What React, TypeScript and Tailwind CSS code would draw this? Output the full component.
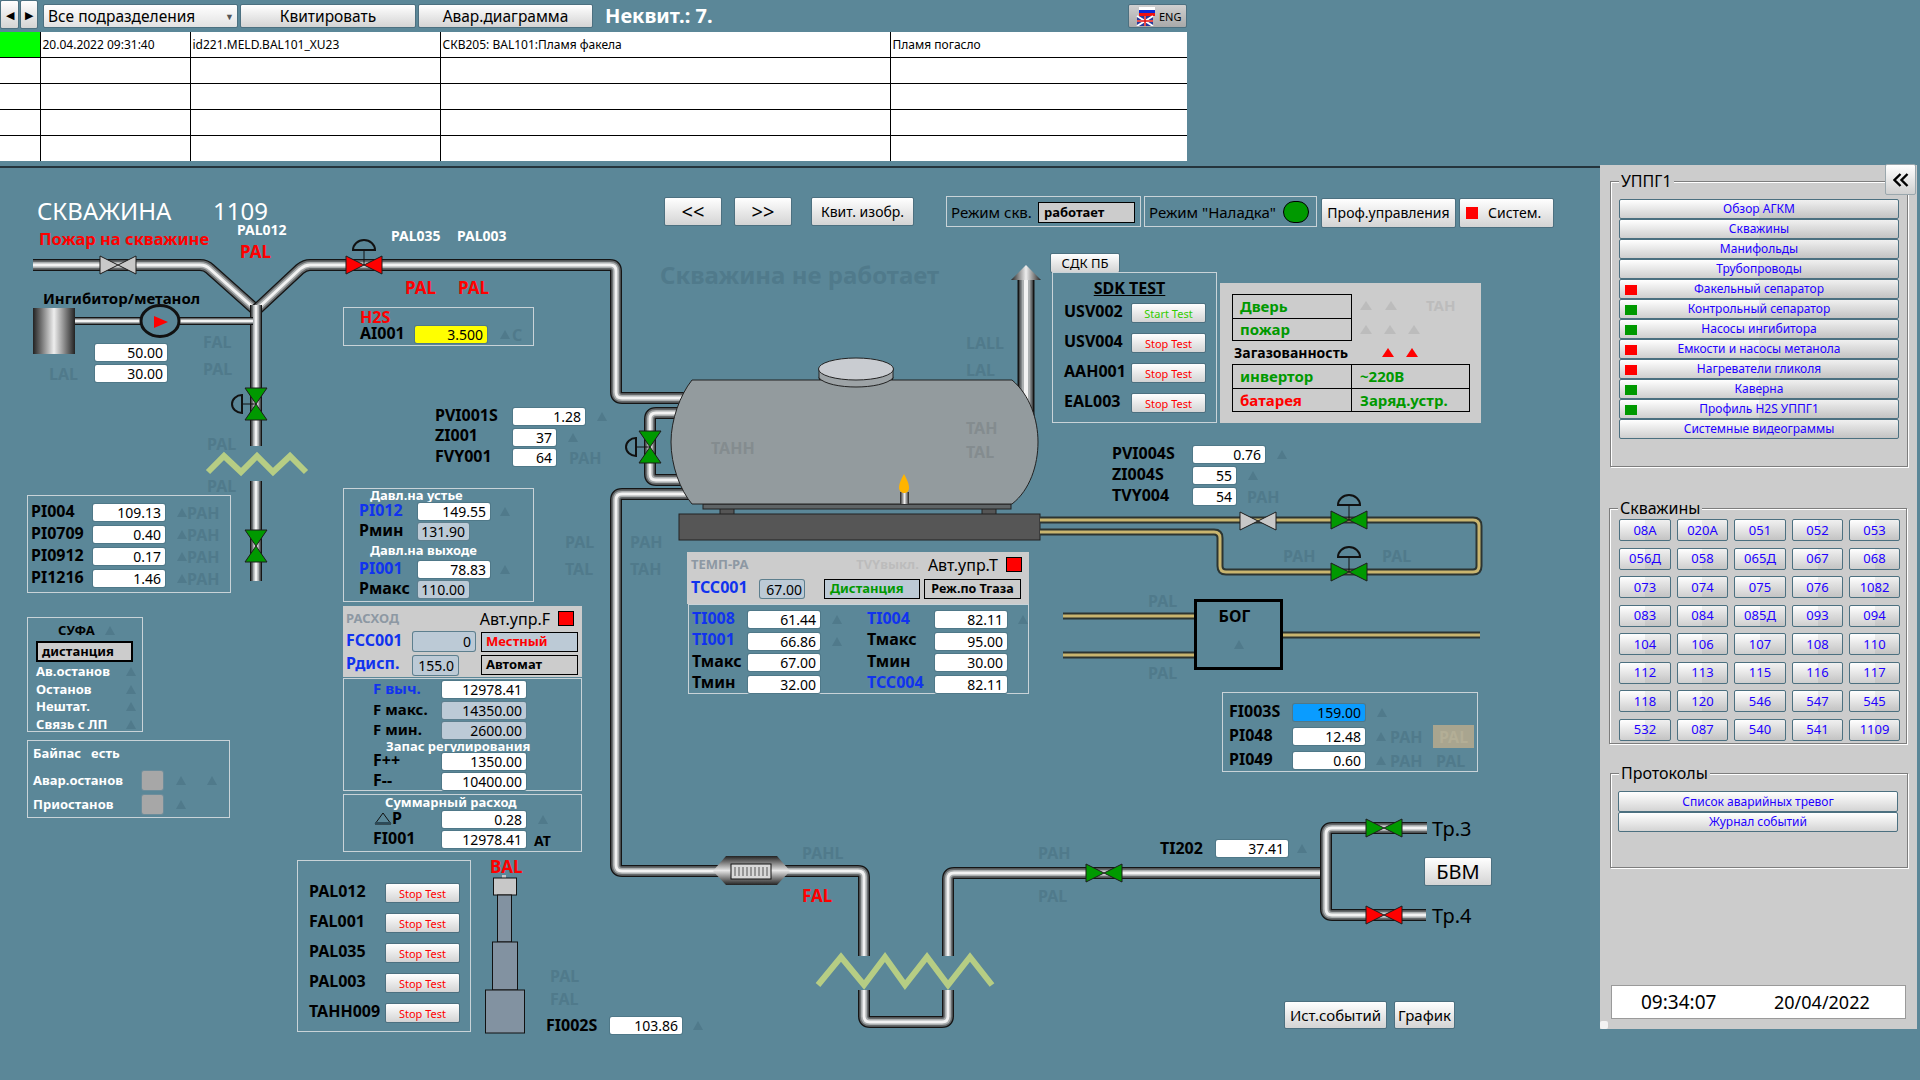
import type { ReactNode } from "react";
import clsx, { type ClassValue } from "clsx";
import { twMerge } from "tailwind-merge";

type Props = { className?: string; children?: ReactNode };

const cn = (...parts: ClassValue[]) => twMerge(clsx(parts));

const menuItems: { label: string; led?: "red" | "green" }[] = [
  { label: "Обзор АГКМ" },
  { label: "Скважины" },
  { label: "Манифольды" },
  { label: "Трубопроводы" },
  { label: "Факельный сепаратор", led: "red" },
  { label: "Контрольный сепаратор", led: "green" },
  { label: "Насосы ингибитора", led: "green" },
  { label: "Емкости и насосы метанола", led: "red" },
  { label: "Нагреватели гликоля", led: "red" },
  { label: "Каверна", led: "green" },
  { label: "Профиль H2S УППГ1", led: "green" },
  { label: "Системные видеограммы" },
];

const wells = [
  "08А", "020А", "051", "052", "053",
  "056Д", "058", "065Д", "067", "068",
  "073", "074", "075", "076", "1082",
  "083", "084", "085Д", "093", "094",
  "104", "106", "107", "108", "110",
  "112", "113", "115", "116", "117",
  "118", "120", "546", "547", "545",
  "532", "087", "540", "541", "1109",
];

const stopTests = ["PAL012", "FAL001", "PAL035", "PAL003", "TAHH009"];

function Val({ className, children }: Props) {
  return (
    <div className={cn("flex h-[17px] items-center justify-end rounded-[2px] bg-white pr-[4px] pt-[1px] text-[14px] text-black shadow-[0_0_0_1px_#4f7888]", className, "leading-none")}>
      {children}
    </div>
  );
}

function GrayVal({ className, children }: Props) {
  return (
    <div className={cn("flex h-[17px] items-center justify-end rounded-[2px] bg-[#bccad6] pr-[4px] pt-[1px] text-[14px] text-black shadow-[0_0_0_1px_#5d7f8e]", className, "leading-none")}>
      {children}
    </div>
  );
}

function Tag({ className, children }: Props) {
  return <span className={cn("-translate-y-[2px] whitespace-nowrap text-[16px] font-bold text-black", className, "leading-[16px]")}>{children}</span>;
}

function Ghost({ className, children }: Props) {
  return <span className={cn("whitespace-nowrap text-[16px] font-bold text-[#507a8b]", className, "leading-[16px]")}>{children}</span>;
}

function Tri({ className }: { className?: string }) {
  return <span className={cn("inline-block h-0 w-0 border-x-[5px] border-b-[9px] border-x-transparent border-b-[#507a8b]", className)} />;
}

function Btn({ className, children }: Props) {
  return (
    <button
      type="button"
      className={cn("flex items-center justify-center whitespace-nowrap rounded-[2px] border border-[#4c7080] bg-gradient-to-b from-white to-[#d4d4d4] text-black", className, "leading-none")}
    >
      {children}
    </button>
  );
}

function TestBtn({ children, green = false }: { children: ReactNode; green?: boolean }) {
  return <Btn className={cn("h-[20px] w-[75px] text-[11px]", green ? "text-[#33cc00]" : "text-[#ff0000]")}>{children}</Btn>;
}

function Pipe({ d, w = 12 }: { d: string; w?: number }) {
  return (
    <g fill="none" strokeLinejoin="round">
      <path d={d} stroke="#151515" strokeWidth={w} />
      <path d={d} stroke="#666a6c" strokeWidth={w * 0.78} />
      <path d={d} stroke="#a9adae" strokeWidth={w * 0.52} />
      <path d={d} stroke="#f2f2f2" strokeWidth={w * 0.24} />
    </g>
  );
}

function GasPipe({ d }: { d: string }) {
  return (
    <g fill="none" strokeLinejoin="round">
      <path d={d} stroke="#2c3532" strokeWidth={7} />
      <path d={d} stroke="#c9b56f" strokeWidth={3} />
    </g>
  );
}

function ValveH({ x, y, fill, hw = 18, hh = 9 }: { x: number; y: number; fill: string; hw?: number; hh?: number }) {
  return (
    <polygon
      points={`${x - hw},${y - hh} ${x},${y} ${x + hw},${y - hh} ${x + hw},${y + hh} ${x},${y} ${x - hw},${y + hh}`}
      fill={fill}
      stroke="#1c1c1c"
      strokeWidth={1}
    />
  );
}

function ValveV({ x, y, fill, hw = 11, hh = 16 }: { x: number; y: number; fill: string; hw?: number; hh?: number }) {
  return (
    <polygon
      points={`${x - hw},${y - hh} ${x + hw},${y - hh} ${x},${y} ${x + hw},${y + hh} ${x - hw},${y + hh} ${x},${y}`}
      fill={fill}
      stroke="#1c1c1c"
      strokeWidth={1}
    />
  );
}

function DomeUp({ x, y }: { x: number; y: number }) {
  return (
    <g fill="none" stroke="#111" strokeWidth={2}>
      <path d={`M${x - 11} ${y - 15} A11 10 0 0 1 ${x + 11} ${y - 15} Z`} />
      <path d={`M${x} ${y - 15} V${y}`} strokeWidth={1} />
    </g>
  );
}

function DomeLeft({ x, y }: { x: number; y: number }) {
  return (
    <g fill="none" stroke="#111" strokeWidth={2}>
      <path d={`M${x - 14} ${y - 9} A10 9 0 0 0 ${x - 14} ${y + 9} Z`} />
      <path d={`M${x - 14} ${y} H${x}`} strokeWidth={1} />
    </g>
  );
}

function Scheme() {
  return (
    <svg className="absolute left-0 top-0 h-[1080px] w-[1600px]" viewBox="0 0 1600 1080">
      <defs>
        <linearGradient id="cyl" x1="0" x2="1" y1="0" y2="0">
          <stop offset="0" stopColor="#222" />
          <stop offset="0.5" stopColor="#eee" />
          <stop offset="1" stopColor="#222" />
        </linearGradient>
        <linearGradient id="band" x1="0" x2="0" y1="0" y2="1">
          <stop offset="0" stopColor="#222" />
          <stop offset="0.5" stopColor="#e6e6e6" />
          <stop offset="1" stopColor="#222" />
        </linearGradient>
      </defs>

      <Pipe d="M33 265 H200 Q206 265 210 269 L256 310" />
      <Pipe d="M256 310 L300 269 Q305 265 310 265 H610 Q616 265 616 271 V392 Q616 398 622 398 H690" />
      <Pipe d="M256 305 V446" />
      <Pipe d="M256 481 V581" />
      <Pipe d="M75 321 H253" w={8} />
      <Pipe d="M690 494 H622 Q616 494 616 500 V865 Q616 871 622 871 H858 Q864 871 864 877 V956" />
      <Pipe d="M864 990 V1016 Q864 1022 870 1022 H942 Q948 1022 948 1016 V990" />
      <Pipe d="M948 956 V879 Q948 873 954 873 H1322" />
      <Pipe d="M1427 828 H1332 Q1326 828 1326 834 V909 Q1326 915 1332 915 H1426" />
      <Pipe d="M690 413 H656 Q650 413 650 419 V474 Q650 480 656 480 H690" />
      <Pipe d="M1026 280 V420" w={17} />
      <polygon points="1026,265 1041,280 1011,280" fill="url(#cyl)" />

      <rect x="33" y="308" width="42" height="46" fill="url(#cyl)" />
      <ellipse cx="160" cy="321" rx="19" ry="15.5" fill="#5b8798" stroke="#111" strokeWidth={3} />
      <polygon points="154,316 168,322 154,328" fill="#ff0000" />

      <ValveH x={118} y={265} fill="#c8c8c8" />
      <ValveH x={364} y={265} fill="#ff0000" />
      <DomeUp x={364} y={265} />
      <ValveV x={256} y={404} fill="#009900" />
      <DomeLeft x={256} y={404} />
      <ValveV x={256} y={546} fill="#009900" />
      <ValveV x={650} y={447} fill="#009900" />
      <DomeLeft x={650} y={447} />

      <polyline points="208,472 224,456 241,472 257,456 273,472 290,456 306,472" fill="none" stroke="#b6cd84" strokeWidth={6} />
      <polyline points="818,985 841,957 864,985 885,957 905,985 927,957 948,985 970,957 992,985" fill="none" stroke="#b6cd84" strokeWidth={6} />

      <rect x="720" y="508" width="14" height="7" fill="#555" stroke="#222" />
      <rect x="982" y="508" width="14" height="7" fill="#555" stroke="#222" />
      <rect x="679" y="514" width="361" height="26" fill="#565656" stroke="#222" />
      <rect x="703" y="504" width="308" height="5" fill="#5f6466" stroke="#222" />
      <ellipse cx="856" cy="378" rx="37" ry="12" fill="#7f8587" stroke="#222" />
      <path d="M692 380 H1012 C1030 395 1038 420 1038 442 C1038 465 1030 490 1012 504 H692 C680 490 671 465 671 442 C671 420 680 395 692 380 Z" fill="#939b9e" stroke="#222" />
      <path d="M819 369 V378 C830 390 882 390 893 378 V369 Z" fill="#9da3a6" stroke="#222" />
      <ellipse cx="856" cy="369" rx="37.5" ry="11" fill="#c9ccd1" stroke="#222" />

      <rect x="900" y="492" width="9" height="12" fill="url(#cyl)" />
      <path d="M904 474 C900 481 899 485 899 488 C899 491 902 493 904 493 C907 493 909 491 909 488 C909 485 908 481 904 474 Z" fill="#ffb400" />

      <polygon points="713,871 726,856 777,856 790,871 777,885 726,885" fill="url(#band)" />
      <rect x="731" y="864" width="40" height="15" fill="#d8d8d8" stroke="#111" />
      <path d="M735 867 V876 M739 867 V876 M743 867 V876 M747 867 V876 M751 867 V876 M755 867 V876 M759 867 V876 M763 867 V876 M767 867 V876" stroke="#555" />

      <rect x="502" y="875" width="4" height="4" fill="#c8c8c8" />
      <rect x="493.5" y="878" width="23" height="17" fill="#c8c8c8" stroke="#111" />
      <rect x="497.5" y="895" width="14" height="47" fill="#8292a1" stroke="#111" />
      <rect x="492.5" y="942" width="25" height="48" fill="#8292a1" stroke="#111" />
      <rect x="485.5" y="990" width="39" height="43" fill="#8292a1" stroke="#111" />

      <GasPipe d="M1040 520 H1473 Q1479 520 1479 526 V566 Q1479 572 1473 572 H1226 Q1220 572 1220 566 V538 Q1220 532 1214 532 H1040" />
      <GasPipe d="M1063 616 H1194" />
      <GasPipe d="M1063 655 H1194" />
      <GasPipe d="M1282 635 H1480" />
      <ValveH x={1258} y={521} fill="#c8c8c8" />
      <ValveH x={1349} y={520} fill="#009900" />
      <DomeUp x={1349} y={520} />
      <ValveH x={1349} y={572} fill="#009900" />
      <DomeUp x={1349} y={572} />

      <ValveH x={1104} y={873} fill="#009900" />
      <ValveH x={1384} y={828} fill="#009900" />
      <ValveH x={1384} y={915} fill="#ff0000" />

      <polygon points="375,824 383,813 391,824" fill="none" stroke="#111" strokeWidth={1} />
      <rect x="375" y="822" width="16" height="2" fill="#2c4a58" />
    </svg>
  );
}

function Header() {
  return (
    <div>
      <div className="flex h-[32px] w-[1187px] items-start text-[15.5px] text-black">
        <div className="flex gap-[1px]">
          <Btn className="h-[29px] w-[19px] text-[11px]">◀</Btn>
          <Btn className="h-[29px] w-[18px] text-[11px]">▶</Btn>
        </div>
        <div className="ml-[5px] mt-[4px] flex h-[24px] w-[195px] items-center justify-between rounded-[2px] border border-[#4c7080] bg-gradient-to-b from-white to-[#e2e2e2] pl-[4px] pr-[3px] pt-[1px]">
          <span>Все подразделения</span>
          <span className="text-[9px] text-[#555]">▼</span>
        </div>
        <Btn className="ml-[2px] mt-[4px] h-[24px] w-[176px] pt-[2px] text-[15.5px]">Квитировать</Btn>
        <Btn className="ml-[2px] mt-[4px] h-[24px] w-[175px] pt-[2px] text-[15.5px]">Авар.диаграмма</Btn>
        <span className="ml-[12px] mt-[3px] text-[20px] font-bold leading-[26px] text-white">Неквит.: 7.</span>
        <button
          type="button"
          className="ml-auto mt-[4px] flex h-[24px] w-[59px] items-center gap-[3px] rounded-[2px] border border-[#4c7080] bg-gradient-to-b from-[#d0d0d0] to-[#a9a9a9] pl-[7px] text-[11px] leading-none"
        >
          <svg width="20" height="19" viewBox="0 0 20 19">
            <rect width="16" height="3" x="3" fill="#ffffff" />
            <rect width="16" height="3" x="3" y="3" fill="#0a28d8" />
            <rect width="16" height="3" x="3" y="6" fill="#ee1111" />
            <rect width="16" height="10" x="1" y="9" fill="#2a3a9a" />
            <path d="M1 9 L17 19 M17 9 L1 19 M9 9 V19 M1 14 H17" stroke="#ffffff" strokeWidth={2} />
            <path d="M9 9 V19 M1 14 H17" stroke="#e01010" strokeWidth={1.5} />
          </svg>
          ENG
        </button>
      </div>
      <table className="h-[128px] w-[1187px] table-fixed border-collapse bg-white text-[12px] text-black">
        <colgroup>
          <col className="w-[40px]" />
          <col className="w-[150px]" />
          <col className="w-[250px]" />
          <col className="w-[450px]" />
          <col />
        </colgroup>
        <tbody>
          <tr className="h-[25px]">
            <td className="bg-[#00ff00]" />
            <td className="border-l border-black pl-[2px] pt-[2px]">20.04.2022 09:31:40</td>
            <td className="border-l border-black pl-[2px] pt-[2px]">id221.MELD.BAL101_XU23</td>
            <td className="border-l border-black pl-[2px] pt-[2px]">СКВ205: BAL101:Пламя факела</td>
            <td className="border-l border-black pl-[2px] pt-[2px]">Пламя погасло</td>
          </tr>
          {[0, 1, 2, 3].map((row) => (
            <tr key={row} className="h-[26px] border-t border-black">
              <td />
              <td className="border-l border-black" />
              <td className="border-l border-black" />
              <td className="border-l border-black" />
              <td className="border-l border-black" />
            </tr>
          ))}
        </tbody>
      </table>
      <div className="mt-[5px] h-[2px] w-[1600px] bg-[#24343c]" />
    </div>
  );
}

function LeftTop() {
  return (
    <>
      <span className="absolute left-[37px] top-[196px] text-[24px] leading-[30px] text-white">СКВАЖИНА</span>
      <span className="absolute left-[213px] top-[196px] text-[24px] leading-[30px] text-white">1109</span>
      <span className="absolute left-[39px] top-[230px] whitespace-nowrap text-[16.5px] font-bold leading-[18px] text-[#ff0000]">Пожар на скважине</span>
      <Tag className="absolute left-[237px] top-[224px] text-[14px] text-white">PAL012</Tag>
      <Tag className="absolute left-[391px] top-[230px] text-[14px] text-white">PAL035</Tag>
      <Tag className="absolute left-[457px] top-[230px] text-[14px] text-white">PAL003</Tag>
      <Tag className="absolute left-[240px] top-[246px] text-[17px] text-[#ff0000]">PAL</Tag>
      <Tag className="absolute left-[405px] top-[282px] text-[17px] text-[#ff0000]">PAL</Tag>
      <Tag className="absolute left-[458px] top-[282px] text-[17px] text-[#ff0000]">PAL</Tag>
      <Tag className="absolute left-[43px] top-[292px] text-[15px]">Ингибитор/метанол</Tag>
      <Val className="absolute left-[95px] top-[344px] w-[72px]">50.00</Val>
      <Val className="absolute left-[95px] top-[365px] w-[72px]">30.00</Val>
      <Ghost className="absolute left-[203px] top-[334px]">FAL</Ghost>
      <Ghost className="absolute left-[203px] top-[361px]">PAL</Ghost>
      <Ghost className="absolute left-[49px] top-[366px]">LAL</Ghost>
      <Ghost className="absolute left-[207px] top-[436px]">PAL</Ghost>
      <Ghost className="absolute left-[207px] top-[478px]">PAL</Ghost>

      <div className="absolute left-[343px] top-[307px] flex h-[39px] w-[191px] flex-col border border-[#c9d3d8] pl-[16px] pt-[3px]">
        <Tag className="text-[#ff0000]">H2S</Tag>
        <div className="-mt-[1px] flex items-center">
          <Tag className="w-[55px]">AI001</Tag>
          <Val className="w-[72px] bg-[#ffff00]">3.500</Val>
          <Tri className="ml-[13px]" />
          <Ghost className="ml-[2px]">C</Ghost>
        </div>
      </div>

      <div className="absolute left-[27px] top-[495px] flex h-[98px] w-[204px] flex-col gap-[5px] border border-[#c9d3d8] pl-[3px] pt-[8px]">
        {[
          ["PI004", "109.13"],
          ["PI0709", "0.40"],
          ["PI0912", "0.17"],
          ["PI1216", "1.46"],
        ].map(([tag, value]) => (
          <div key={tag} className="flex items-center">
            <Tag className="w-[62px]">{tag}</Tag>
            <Val className="w-[72px]">{value}</Val>
            <Tri className="ml-[12px]" />
            <Ghost>PAH</Ghost>
          </div>
        ))}
      </div>

      <div className="absolute left-[27px] top-[617px] flex h-[115px] w-[116px] flex-col items-start border border-[#c9d3d8] pl-[8px] pt-[4px] text-[13px] font-bold leading-[17.5px] text-white">
        <span className="flex w-full items-center pl-[22px] leading-[16px] text-black">
          СУФА
          <Tri className="ml-[10px]" />
        </span>
        <div className="mb-[1px] mt-[3px] flex h-[21px] w-[97px] items-center border-2 border-black bg-[#cccccc] pl-[4px] text-black">дистанция</div>
        {["Ав.останов", "Останов", "Нештат.", "Связь с ЛП"].map((name) => (
          <span key={name} className="flex w-[100px] items-center justify-between">
            {name}
            <Tri />
          </span>
        ))}
      </div>

      <div className="absolute left-[27px] top-[740px] flex h-[78px] w-[203px] flex-col border border-[#c9d3d8] pl-[5px] pt-[4px] text-[13px] font-bold leading-[17px] text-white">
        <span className="whitespace-pre">Байпас   есть</span>
        <div className="mt-[9px] flex h-[19px] items-center">
          <span className="w-[109px]">Авар.останов</span>
          <span className="h-[19px] w-[21px] rounded-[2px] bg-[#a7a7a7] shadow-[0_0_0_1px_#6d8d9b]" />
          <Tri className="ml-[13px]" />
          <Tri className="ml-[21px]" />
        </div>
        <div className="mt-[5px] flex h-[19px] items-center">
          <span className="w-[109px]">Приостанов</span>
          <span className="h-[19px] w-[21px] rounded-[2px] bg-[#a7a7a7] shadow-[0_0_0_1px_#6d8d9b]" />
          <Tri className="ml-[13px]" />
        </div>
      </div>

      <div className="absolute left-[435px] top-[408px] flex flex-col gap-[3.5px]">
        <div className="flex items-center">
          <Tag className="w-[78px]">PVI001S</Tag>
          <Val className="w-[72px]">1.28</Val>
          <Tri className="ml-[12px]" />
        </div>
        <div className="flex items-center">
          <Tag className="w-[78px]">ZI001</Tag>
          <Val className="w-[43px]">37</Val>
          <Tri className="ml-[12px]" />
        </div>
        <div className="flex items-center">
          <Tag className="w-[78px]">FVY001</Tag>
          <Val className="w-[43px]">64</Val>
          <Ghost className="ml-[13px]">PAH</Ghost>
        </div>
      </div>

      <div className="absolute left-[343px] top-[488px] flex h-[114px] w-[191px] flex-col border border-[#c9d3d8] pl-[15px]">
        <span className="h-[14px] pl-[11px] text-[13px] font-bold leading-[13px] text-white">Давл.на устье</span>
        <div className="flex items-center">
          <Tag className="w-[59px] text-[#1133ee]">PI012</Tag>
          <Val className="w-[72px]">149.55</Val>
          <Tri className="ml-[10px]" />
        </div>
        <div className="mt-[3px] flex items-center">
          <Tag className="w-[59px]">Pмин</Tag>
          <GrayVal className="w-[51px]">131.90</GrayVal>
        </div>
        <span className="flex h-[21px] items-center pl-[11px] text-[13px] font-bold text-white">Давл.на выходе</span>
        <div className="flex items-center">
          <Tag className="w-[59px] text-[#1133ee]">PI001</Tag>
          <Val className="w-[72px]">78.83</Val>
          <Tri className="ml-[10px]" />
        </div>
        <div className="mt-[3px] flex items-center">
          <Tag className="w-[59px]">Pмакс</Tag>
          <GrayVal className="w-[51px]">110.00</GrayVal>
        </div>
      </div>
    </>
  );
}

function FlowBlock() {
  return (
    <>
      <div className="absolute left-[343px] top-[606px] h-[71px] w-[239px] bg-[#cccccc] pl-[3px]">
        <div className="flex h-[25px] items-center pr-[8px]">
          <span className="text-[13px] font-bold text-[#8d98a3]">РАСХОД</span>
          <span className="ml-auto text-[16px] leading-none">Авт.упр.F</span>
          <span className="ml-[8px] h-[15px] w-[16px] border border-black bg-[#ff0000]" />
        </div>
        <div className="flex h-[21px] items-center">
          <Tag className="w-[67px] text-[#1133ee]">FCC001</Tag>
          <GrayVal className="h-[19px] w-[62px]">0</GrayVal>
          <div className="ml-[6px] flex h-[20px] w-[97px] items-center border border-black bg-[#bccad6] pl-[4px] text-[13px] font-bold text-[#ff0000]">Местный</div>
        </div>
        <div className="mt-[3px] flex h-[20px] items-center">
          <Tag className="w-[67px] text-[#1133ee]">Рдисп.</Tag>
          <GrayVal className="h-[19px] w-[45px]">155.0</GrayVal>
          <div className="ml-[23px] flex h-[20px] w-[97px] items-center border border-black bg-[#cccccc] pl-[4px] text-[13px] font-bold">Автомат</div>
        </div>
      </div>

      <div className="absolute left-[343px] top-[678px] flex h-[113px] w-[239px] flex-col border border-[#c9d3d8] pl-[29px] pt-[2px]">
        <div className="flex items-center">
          <Tag className="w-[69px] text-[15px] text-[#1133ee]">F выч.</Tag>
          <Val className="w-[84px]">12978.41</Val>
        </div>
        <div className="mt-[4px] flex items-center">
          <Tag className="w-[69px] text-[15px]">F макс.</Tag>
          <GrayVal className="w-[84px]">14350.00</GrayVal>
        </div>
        <div className="mt-[3px] flex items-center">
          <Tag className="w-[69px] text-[15px]">F мин.</Tag>
          <GrayVal className="w-[84px]">2600.00</GrayVal>
        </div>
        <span className="h-[14px] whitespace-nowrap pl-[13px] text-[13px] font-bold leading-[14px] text-white">Запас регулирования</span>
        <div className="flex items-center">
          <Tag className="w-[69px]">F++</Tag>
          <Val className="w-[84px]">1350.00</Val>
        </div>
        <div className="mt-[3px] flex items-center">
          <Tag className="w-[69px]">F--</Tag>
          <Val className="w-[84px]">10400.00</Val>
        </div>
      </div>

      <div className="absolute left-[343px] top-[794px] flex h-[58px] w-[239px] flex-col border border-[#c9d3d8] pl-[29px]">
        <span className="h-[16px] whitespace-nowrap pl-[12px] text-[13px] font-bold leading-[15px] text-white">Суммарный расход</span>
        <div className="flex items-center">
          <Tag className="w-[69px] pl-[19px]">P</Tag>
          <Val className="w-[84px]">0.28</Val>
          <Tri className="ml-[12px]" />
        </div>
        <div className="mt-[3px] flex items-center">
          <Tag className="w-[69px]">FI001</Tag>
          <Val className="w-[84px]">12978.41</Val>
          <Tag className="ml-[8px] translate-y-[1px] text-[14px]">AT</Tag>
        </div>
      </div>

      <div className="absolute left-[297px] top-[860px] flex h-[172px] w-[174px] flex-col gap-[10px] border border-[#c9d3d8] pl-[11px] pt-[22px]">
        {stopTests.map((tag) => (
          <div key={tag} className="flex items-center">
            <Tag className="w-[76px]">{tag}</Tag>
            <TestBtn>Stop Test</TestBtn>
          </div>
        ))}
      </div>

      <Tag className="absolute left-[490px] top-[861px] text-[17px] text-[#ff0000]">BAL</Tag>
      <Ghost className="absolute left-[550px] top-[968px]">PAL</Ghost>
      <Ghost className="absolute left-[550px] top-[991px]">FAL</Ghost>
      <Tag className="absolute left-[546px] top-[1019px]">FI002S</Tag>
      <Val className="absolute left-[610px] top-[1017px] w-[72px]">103.86</Val>
      <Tri className="absolute left-[693px] top-[1021px]" />
      <Ghost className="absolute left-[802px] top-[845px]">PAHL</Ghost>
      <Tag className="absolute left-[802px] top-[890px] text-[17px] text-[#ff0000]">FAL</Tag>
      <Ghost className="absolute left-[1038px] top-[845px]">PAH</Ghost>
      <Ghost className="absolute left-[1038px] top-[888px]">PAL</Ghost>
    </>
  );
}

function CenterTop() {
  return (
    <>
      <Btn className="absolute left-[664px] top-[197px] h-[29px] w-[58px] text-[20px]">&lt;&lt;</Btn>
      <Btn className="absolute left-[734px] top-[197px] h-[29px] w-[58px] text-[20px]">&gt;&gt;</Btn>
      <Btn className="absolute left-[811px] top-[197px] h-[29px] w-[103px] text-[14px]">Квит. изобр.</Btn>

      <div className="absolute left-[946px] top-[196px] flex h-[31px] w-[195px] items-center border border-[#c9d3d8] pl-[4px] pt-[2px] text-[15px]">
        <span>Режим скв.</span>
        <span className="absolute left-[91px] top-[5px] flex h-[21px] w-[97px] items-center border border-black bg-[#cccccc] pl-[5px] text-[13px] font-bold">работает</span>
      </div>
      <div className="absolute left-[1144px] top-[196px] flex h-[31px] w-[173px] items-center justify-between border border-[#c9d3d8] pl-[4px] pr-[7px] text-[15px]">
        <span className="whitespace-nowrap pt-[2px]">Режим "Наладка"</span>
        <span className="h-[22px] w-[26px] rounded-full border border-black bg-[#009900]" />
      </div>
      <Btn className="absolute left-[1321px] top-[198px] h-[30px] w-[135px] text-[14px]">Проф.управления</Btn>
      <Btn className="absolute left-[1459px] top-[198px] h-[30px] w-[95px] justify-start gap-[10px] pl-[6px] text-[14px]">
        <span className="h-[12px] w-[12px] bg-[#ff0000]" />
        Систем.
      </Btn>

      <span className="absolute left-[660px] top-[259px] whitespace-nowrap text-[24px] font-bold leading-[32px] text-[#507a8b]">Скважина не работает</span>
      <Ghost className="absolute left-[966px] top-[335px]">LALL</Ghost>
      <Ghost className="absolute left-[966px] top-[362px]">LAL</Ghost>
      <Ghost className="absolute left-[711px] top-[440px] text-[#848c8f]">TAHH</Ghost>
      <Ghost className="absolute left-[966px] top-[420px] text-[#848c8f]">TAH</Ghost>
      <Ghost className="absolute left-[966px] top-[444px] text-[#848c8f]">TAL</Ghost>
      <Ghost className="absolute left-[565px] top-[534px]">PAL</Ghost>
      <Ghost className="absolute left-[565px] top-[561px]">TAL</Ghost>
      <Ghost className="absolute left-[630px] top-[534px]">PAH</Ghost>
      <Ghost className="absolute left-[630px] top-[561px]">TAH</Ghost>

      <Btn className="absolute left-[1050px] top-[253px] h-[20px] w-[70px] text-[13px]">СДК ПБ</Btn>
      <div className="absolute left-[1052px] top-[272px] flex h-[151px] w-[165px] flex-col gap-[10px] border border-[#c9d3d8] pl-[11px]">
        <span className="-mb-[10px] flex h-[30px] items-center justify-center pr-[21px] text-[16px] font-bold underline">SDK TEST</span>
        {["USV002", "USV004", "AAH001", "EAL003"].map((tag, index) => (
          <div key={tag} className="flex items-center">
            <Tag className="w-[67px]">{tag}</Tag>
            <TestBtn green={index === 0}>{index === 0 ? "Start Test" : "Stop Test"}</TestBtn>
          </div>
        ))}
      </div>

      <div className="absolute left-[1220px] top-[283px] h-[140px] w-[261px] bg-[#cccccc] pl-[12px] pt-[11px] text-[15px] font-bold leading-none">
        <div className="flex">
          <div className="flex h-[47px] w-[120px] flex-col border border-black pl-[7px] text-[#009900]">
            <span className="flex h-[23px] items-center">Дверь</span>
            <span className="-ml-[7px] flex flex-1 items-center border-t border-black pl-[7px]">пожар</span>
          </div>
          <div className="flex flex-col text-[#bcbcbc]">
            <div className="flex h-[23px] items-center pl-[8px]">
              <Tri className="border-x-[6px] border-b-[#bcbcbc]" />
              <Tri className="ml-[13px] border-x-[6px] border-b-[#bcbcbc]" />
              <span className="ml-[29px]">ТАН</span>
            </div>
            <div className="flex flex-1 items-center pl-[8px]">
              <Tri className="border-x-[6px] border-b-[#bcbcbc]" />
              <Tri className="ml-[12px] border-x-[6px] border-b-[#bcbcbc]" />
              <Tri className="ml-[12px] border-x-[6px] border-b-[#bcbcbc]" />
            </div>
          </div>
        </div>
        <div className="flex h-[23px] items-center pl-[2px] text-[14px] text-black">
          <span className="w-[148px]">Загазованность</span>
          <Tri className="border-x-[6px] border-b-[#ff0000]" />
          <Tri className="ml-[12px] border-x-[6px] border-b-[#ff0000]" />
        </div>
        <div className="grid h-[48px] w-[238px] grid-cols-[119px_1fr] grid-rows-2 border border-black text-[#009900]">
          <span className="flex items-center border-r border-black pl-[7px]">инвертор</span>
          <span className="flex items-center pl-[8px]">~220В</span>
          <span className="flex items-center border-r border-t border-black pl-[7px] text-[#ff0000]">батарея</span>
          <span className="flex items-center border-t border-black pl-[8px]">Заряд.устр.</span>
        </div>
      </div>

      <div className="absolute left-[1112px] top-[446px] flex flex-col gap-[4px]">
        <div className="flex items-center">
          <Tag className="w-[81px]">PVI004S</Tag>
          <Val className="w-[72px]">0.76</Val>
          <Tri className="ml-[12px]" />
        </div>
        <div className="flex items-center">
          <Tag className="w-[81px]">ZI004S</Tag>
          <Val className="w-[43px]">55</Val>
          <Tri className="ml-[12px]" />
        </div>
        <div className="flex items-center">
          <Tag className="w-[81px]">TVY004</Tag>
          <Val className="w-[43px]">54</Val>
          <Ghost className="ml-[11px]">PAH</Ghost>
        </div>
      </div>

      <Ghost className="absolute left-[1283px] top-[548px]">PAH</Ghost>
      <Ghost className="absolute left-[1382px] top-[548px]">PAL</Ghost>
      <Ghost className="absolute left-[1148px] top-[593px]">PAL</Ghost>
      <Ghost className="absolute left-[1148px] top-[665px]">PAL</Ghost>
      <div className="absolute left-[1194px] top-[599px] flex h-[71px] w-[89px] flex-col items-center border-[3px] border-black pt-[8px]">
        <Tag className="-ml-[8px]">БОГ</Tag>
        <Tri className="mt-[14px]" />
      </div>
    </>
  );
}

function TempBlock() {
  return (
    <>
      <div className="absolute left-[687px] top-[552px] h-[52px] w-[342px] bg-[#cccccc] pl-[4px]">
        <div className="flex h-[25px] items-center pr-[7px]">
          <span className="text-[13px] font-bold text-[#8d98a3]">ТЕМП-РА</span>
          <span className="ml-auto text-[13px] font-bold text-[#bcbcbc]">TVYвыкл.</span>
          <span className="ml-[9px] text-[16px] leading-none">Авт.упр.Т</span>
          <span className="ml-[8px] h-[15px] w-[16px] border border-black bg-[#ff0000]" />
        </div>
        <div className="flex h-[24px] items-center">
          <Tag className="w-[69px] text-[#1133ee]">TCC001</Tag>
          <GrayVal className="h-[18px] w-[44px] pr-[2px]">67.00</GrayVal>
          <div className="ml-[20px] flex h-[20px] w-[96px] items-center border border-black bg-[#bccad6] pl-[5px] text-[13px] font-bold text-[#009900]">Дистанция</div>
          <div className="ml-[4px] flex h-[20px] w-[97px] items-center justify-center whitespace-nowrap border border-black bg-[#cccccc] text-[12.5px] font-bold">Реж.по Тгаза</div>
        </div>
      </div>

      <div className="absolute left-[688px] top-[604px] grid h-[90px] w-[341px] grid-cols-[175px_1fr] gap-y-[4px] border border-[#c9d3d8] pl-[3px] pt-[6px]">
        {[
          ["TI008", "61.44", "TI004", "82.11"],
          ["TI001", "66.86", "Тмакс", "95.00"],
          ["Тмакс", "67.00", "Тмин", "30.00"],
          ["Тмин", "32.00", "TCC004", "82.11"],
        ].map(([a, av, b, bv], index) => (
          <div key={a + index} className="contents">
            <div className="flex items-center">
              <Tag className={cn("w-[56px]", index < 2 && "text-[#1133ee]")}>{a}</Tag>
              <Val className="w-[72px]">{av}</Val>
              {index < 2 ? <Tri className="ml-[12px]" /> : null}
            </div>
            <div className="flex items-center">
              <Tag className={cn("w-[68px]", (index === 0 || index === 3) && "text-[#1133ee]")}>{b}</Tag>
              <Val className="w-[72px]">{bv}</Val>
              {index === 0 ? <Tri className="ml-[11px]" /> : null}
            </div>
          </div>
        ))}
      </div>

      <div className="absolute left-[1222px] top-[692px] h-[80px] w-[256px] border border-[#c9d3d8] pl-[6px] pt-[11px]">
        <div className="flex flex-col gap-[4px]">
          <div className="flex items-center">
            <Tag className="w-[64px]">FI003S</Tag>
            <Val className="w-[72px] bg-[#0a9cff]">159.00</Val>
            <Tri className="ml-[12px]" />
          </div>
          <div className="flex items-center">
            <Tag className="w-[64px]">PI048</Tag>
            <Val className="w-[72px]">12.48</Val>
            <Tri className="ml-[11px]" />
            <Ghost className="ml-[4px] w-[43px]">PAH</Ghost>
            <Ghost className="flex h-[23px] w-[41px] items-center justify-center bg-[#a9a58f] text-[#b3ae96]">PAL</Ghost>
          </div>
          <div className="flex items-center">
            <Tag className="w-[64px]">PI049</Tag>
            <Val className="w-[72px]">0.60</Val>
            <Tri className="ml-[11px]" />
            <Ghost className="ml-[4px] w-[43px]">PAH</Ghost>
            <Ghost className="pl-[3px]">PAL</Ghost>
          </div>
        </div>
      </div>

      <Tag className="absolute left-[1160px] top-[842px]">TI202</Tag>
      <Val className="absolute left-[1216px] top-[840px] w-[72px]">37.41</Val>
      <Tri className="absolute left-[1297px] top-[844px]" />
      <span className="absolute left-[1432px] top-[816px] text-[20px] leading-[26px] text-black">Тр.3</span>
      <span className="absolute left-[1432px] top-[903px] text-[20px] leading-[26px] text-black">Тр.4</span>
      <Btn className="absolute left-[1424px] top-[857px] h-[29px] w-[68px] text-[20px]">БВМ</Btn>
      <Btn className="absolute left-[1284px] top-[1001px] h-[28px] w-[103px] text-[15px]">Ист.событий</Btn>
      <Btn className="absolute left-[1394px] top-[1001px] h-[28px] w-[61px] text-[15px]">График</Btn>
    </>
  );
}

function Group({ title, className, children }: { title: string; className?: string; children?: ReactNode }) {
  return (
    <div className={cn("relative border border-[#7d7d7d] shadow-[1px_1px_0_#ffffff,inset_1px_1px_0_#ffffff]", className)}>
      <span className="absolute -top-[12px] left-[8px] bg-[#cccccc] px-[2px] text-[16px] leading-[22px] text-black">{title}</span>
      {children}
    </div>
  );
}

function SideBtn({ className, children }: Props) {
  return (
    <button
      type="button"
      className={cn(
        "relative flex items-center justify-center whitespace-nowrap rounded-[2px] border border-[#4c7080] bg-[linear-gradient(90deg,transparent_50%,rgba(0,0,0,0.06)_50%),linear-gradient(#ffffff,#cfcfcf)] text-[12px] text-[#2200ff]",
        className,
        "leading-none",
      )}
    >
      {children}
    </button>
  );
}

function Sidebar() {
  return (
    <aside className="relative mt-[165px] h-[864px] w-[317px] bg-[#cccccc] pl-[10px]">
      <Group title="УППГ1" className="mt-[16px] h-[286px] w-[298px] pl-[8px] pt-[17px]">
        <div className="flex w-[280px] flex-col">
          {menuItems.map((item) => (
            <SideBtn key={item.label} className="h-[20px]">
              {item.led ? (
                <span className={cn("absolute left-[5px] top-[5px] h-[10px] w-[12px]", item.led === "red" ? "bg-[#ff0000]" : "bg-[#009900]")} />
              ) : null}
              {item.label}
            </SideBtn>
          ))}
        </div>
      </Group>
      <button
        type="button"
        className="absolute left-[285px] top-[-1px] flex h-[31px] w-[31px] items-center justify-center rounded-[2px] border border-[#9aa7ad] bg-gradient-to-b from-white to-[#d0d0d0] text-black"
      >
        <svg width="16" height="14" viewBox="0 0 16 14" fill="none" stroke="currentColor" strokeWidth="2.4">
          <path d="M7.5 1 L1.5 7 L7.5 13 M14.5 1 L8.5 7 L14.5 13" />
        </svg>
      </button>

      <Group title="Скважины" className="-ml-[1px] mt-[41px] h-[236px] w-[298px] pl-[9px] pt-[10px]">
        <div className="grid grid-cols-[52px_51px_52px_51px_51px] gap-x-[6px] gap-y-[6.5px]">
          {wells.map((well) => (
            <SideBtn key={well} className="h-[22px] text-[13px]">
              {well}
            </SideBtn>
          ))}
        </div>
      </Group>

      <Group title="Протоколы" className="mt-[29px] h-[95px] w-[298px] pl-[7px] pt-[17px]">
        <div className="flex w-[280px] flex-col">
          <Btn className="h-[21px] text-[12px] text-[#2200ff]">Список аварийных тревог</Btn>
          <Btn className="h-[20px] text-[12px] text-[#2200ff]">Журнал событий</Btn>
        </div>
      </Group>

      <div className="ml-[1px] mt-[117px] flex h-[34px] w-[295px] items-center border border-[#9a9a9a] bg-white pl-[29px] text-[19px] leading-none text-black">
        <span className="w-[133px]">09:34:07</span>
        <span className="text-[18px]">20/04/2022</span>
      </div>
      <span className="absolute bottom-0 left-0 h-[8px] w-[8px] rounded-[2px] bg-[#f2f2f2]" />
    </aside>
  );
}

export default function App() {
  return (
    <div className="flex h-[1080px] w-[1920px] overflow-hidden bg-[#5b8798] [font-family:'Noto_Sans',sans-serif]">
      <main className="relative h-[1080px] w-[1600px]">
        <Header />
        <Scheme />
        <LeftTop />
        <FlowBlock />
        <CenterTop />
        <TempBlock />
      </main>
      <Sidebar />
    </div>
  );
}
